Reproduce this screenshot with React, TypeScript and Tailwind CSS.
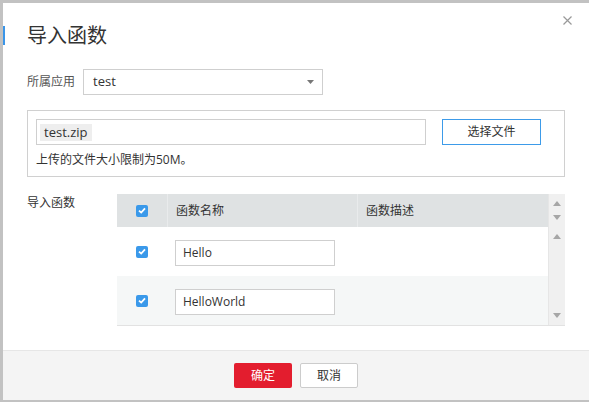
import React from 'react';

const font = { fontFamily: '"Open Sans", "Noto Sans CJK SC", sans-serif' };

const Check = () => (
  <span className="flex h-[12px] w-[12px] items-center justify-center rounded-[2px] bg-[#3a99ea]">
    <svg width="8" height="7" viewBox="0 0 8 7">
      <path d="M1 3.6 L3.2 5.6 L7 1.4" stroke="#fff" strokeWidth="1.8" fill="none" />
    </svg>
  </span>
);

const Tri = ({ up }: { up?: boolean }) => (
  <svg width="8" height="5" viewBox="0 0 8 5">
    <path d={up ? 'M0 5 L4 0 L8 5 Z' : 'M0 0 L8 0 L4 5 Z'} fill="#a6a6a6" />
  </svg>
);

const Row = ({ name, striped }: { name: string; striped?: boolean }) => (
  <div className={`flex h-[49px] ${striped ? 'bg-[#f5f7f7]' : 'bg-white'}`}>
    <div className="flex w-[50px] items-center justify-center">
      <Check />
    </div>
    <div className="w-[190px] pl-[8px] pt-[13px]">
      <div className="flex h-[26px] w-[160px] items-center border border-[#cfcfcf] bg-white px-[7px] text-[12px] text-[#333]">
        {name}
      </div>
    </div>
    <div className="flex-1" />
  </div>
);

export default function App() {
  return (
    <div className="flex h-[402px] w-[589px] overflow-hidden bg-[#c2c2c2] pl-[3px] pt-[3px] pb-[2px]" style={font}>
      <div className="flex flex-1 flex-col bg-white">
        {/* body */}
        <div className="relative flex-1 pl-[24px]">
          <span className="absolute left-0 top-[23px] h-[19px] w-[2px] bg-[#3a95e8]" />
          <svg className="absolute right-[17px] top-[13px]" width="9" height="9" viewBox="0 0 9 9">
            <path d="M0.5 0.5 L8.5 8.5 M8.5 0.5 L0.5 8.5" stroke="#999" strokeWidth="1.2" />
          </svg>

          <div className="mt-[23px] h-[20px] text-[20px] leading-[20px] text-[#333]">导入函数</div>

          <div className="mt-[23px] flex items-center">
            <span className="w-[56px] text-[12px] text-[#555]">所属应用</span>
            <div className="flex h-[26px] w-[240px] items-center justify-between border border-[#cfcfcf] pl-[9px] pr-[8px] text-[13px] text-[#333]">
              <span>test</span>
              <svg width="7" height="4" viewBox="0 0 7 4">
                <path d="M0 0 L7 0 L3.5 4 Z" fill="#777" />
              </svg>
            </div>
          </div>

          <div className="mt-[15px] w-[538px] border border-[#d0d0d0] pb-[8px] pl-[8px] pt-[8px]">
            <div className="flex items-center">
              <div className="flex h-[26px] w-[390px] items-center border border-[#cfcfcf] px-[3px]">
                <span className="bg-[#eeeeee] px-[4px] text-[13px] leading-[17px] text-[#333]">test.zip</span>
              </div>
              <button className="ml-[16px] h-[26px] w-[99px] border border-[#3d9be9] bg-white text-[12px] text-[#333]">
                选择文件
              </button>
            </div>
            <div className="mt-[7px] text-[12px] leading-[16px] text-[#333]">上传的文件大小限制为50M。</div>
          </div>

          <div className="mt-[17px] flex">
            <span className="w-[90px] text-[12px] leading-[18px] text-[#333]">导入函数</span>
            <div className="flex w-[448px] border-b border-[#e2e2e2]">
              <div className="flex flex-1 flex-col">
                <div className="flex h-[33px] bg-[#dfe2e3] text-[12px] text-[#333]">
                  <div className="flex w-[50px] items-center justify-center">
                    <Check />
                  </div>
                  <div className="flex w-[190px] items-center border-l border-[#e9ebec] pl-[8px]">函数名称</div>
                  <div className="flex flex-1 items-center border-l border-[#e9ebec] pl-[8px]">函数描述</div>
                </div>
                <Row name="Hello" />
                <Row name="HelloWorld" striped />
              </div>
              <div className="flex w-[17px] flex-col items-center border-l border-[#e6e6e6] bg-[#f0f0f0]">
                <div className="flex h-[33px] flex-col items-center justify-between py-[7px]">
                  <Tri up />
                  <Tri />
                </div>
                <div className="flex flex-1 flex-col items-center justify-between pb-[7px] pt-[7px]">
                  <Tri up />
                  <Tri />
                </div>
              </div>
            </div>
          </div>
        </div>

        {/* footer */}
        <div className="flex h-[50px] justify-center gap-[8px] border-t border-[#e6e6e6] bg-[#f4f4f4] pt-[12px]">
          <button className="h-[25px] w-[58px] rounded-[2px] bg-[#e31d2e] text-[12px] text-white">确定</button>
          <button className="h-[25px] w-[58px] rounded-[2px] border border-[#cccccc] bg-white text-[12px] text-[#333]">
            取消
          </button>
        </div>
      </div>
    </div>
  );
}
